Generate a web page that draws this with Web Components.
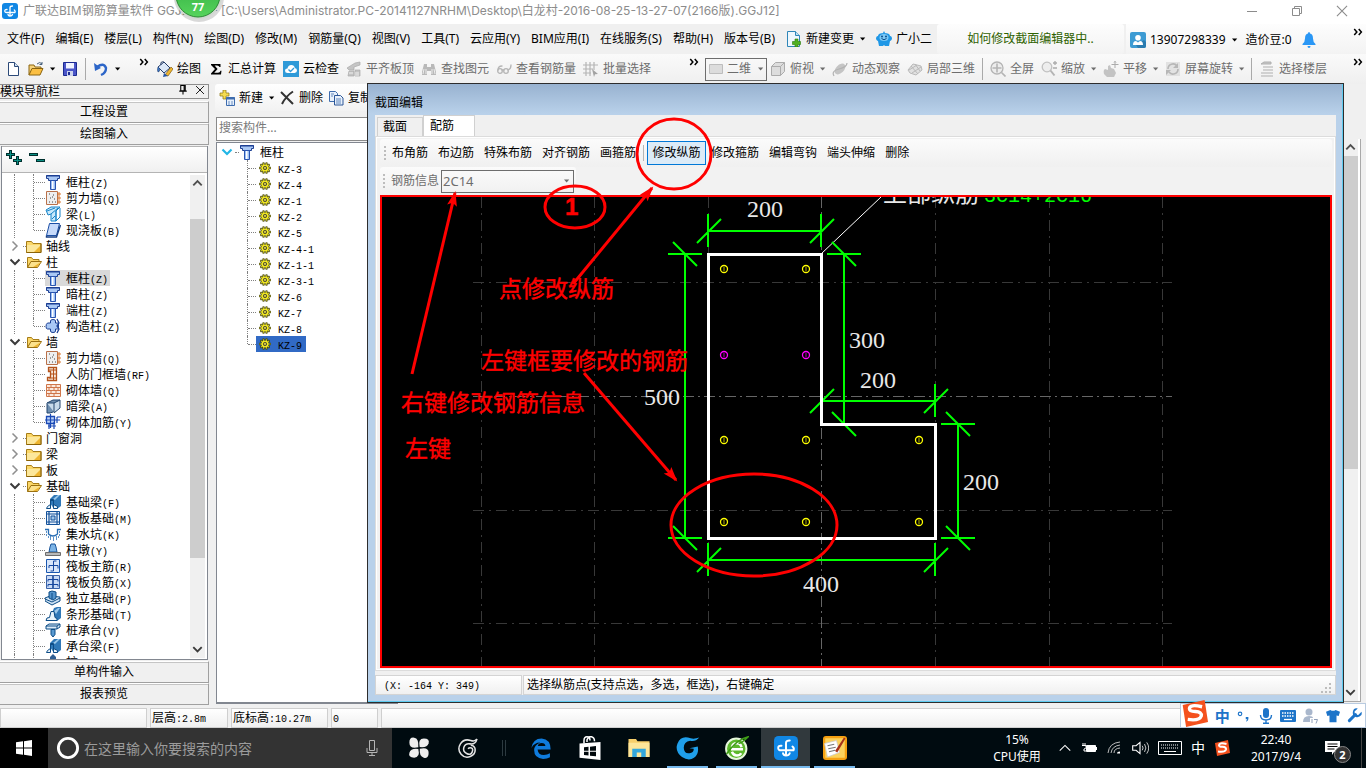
<!DOCTYPE html>
<html lang="zh-CN">
<head>
<meta charset="utf-8">
<title>广联达BIM钢筋算量软件 GGJ2013</title>
<style>
  html, body { margin: 0; height: 100%; overflow: hidden; background: #f0f0f0; }
  body { font: 12px/16px "Noto Sans", "Noto Sans CJK SC", sans-serif; color: #000; }
</style>
</head>
<body>
<app-shell></app-shell>
<script>
const RESET = `
  *, *::before, *::after { box-sizing: border-box; }
  button, input, select { font: inherit; color: inherit; margin: 0; padding: 0; border: 0; background: none; border-radius: 0; outline: 0; }
  button { white-space: nowrap; }
  svg { display: block; }
  .grow { flex: 1; min-width: 0; }
`;
function define(tag, css, render) {
  customElements.define(tag, class extends HTMLElement {
    connectedCallback() {
      if (this.shadowRoot) return;
      const t = document.createElement('template');
      t.innerHTML = `<style>${RESET}${css}</style>${render(this)}`;
      this.attachShadow({ mode: 'open' }).append(t.content.cloneNode(true));
    }
  });
}

/* ---------- icons, drawn on a 16-unit grid unless a view box is given ---------- */
const column = `<path d="M1.5 1.5h13v3h-2v2h-9v-2h-2z" fill="#a9c8f5" stroke="#1d3f93"/><path d="M5.500 6.500h5v9h-5z" fill="#9cc0f5" stroke="#2a55b0"/><path d="M7 7h1.500v8H7z" fill="#fff"/><path d="M1 2h14" stroke="#1d3f93"/>`;
const beamEnd = `<path d="M5 9V5l4-4h7v11l-4 3H9z" fill="#2f78b8"/><path d="M8 5l5-4h2l-5 5z" fill="#9cc8ea"/><path d="M1.500 14.500h4v-8h3v8h4v-2l-4-2V5.500h-3v5l-3 2z" fill="#e8f3fb" stroke="#0d4c86"/>`;
const S = 'fill="none" stroke-linecap="round" stroke-linejoin="round"';
const gearMark = `<path d="M5 1h2v2h2V1h2v3h1V3h2v2h-1v2h3v2h-3v2h1v2h-2v-1h-1v3H9v-2H7v2H5v-3H4v1H2v-2h1V9H0V7h3V5H2V3h2v1h1z" fill="#f7ee22" stroke="#2b2a00" stroke-width=".9"/><circle cx="8" cy="8" r="2.300" fill="#fff45a" stroke="#222"/><circle cx="8" cy="8" r=".8"/>`;
const ICONS = {
  app: `<rect width="16" height="16" rx="3" fill="#1187e4"/><g ${S} stroke="#fff" stroke-width="1.300"><path d="M8 12.500V4.500q0-1.500 2.500-1.500M5 6.500Q2.800 6.300 2.800 8T5 9.500h8q.7-1.500-.7-2.500"/><path d="M6 11.500q.3 1.500 2 1.500 2 0 2.500-1.500"/></g>`,
  file: `<path d="M3.500 1.500h6l4 4v9h-10z" fill="#fff" stroke="#2c4a78"/><path d="M9.500 1.500v4h4" fill="#cfdff2" stroke="#2c4a78"/>`,
  open: `<path d="M1 14V4h5l1 2h6v2" fill="#f6d27a" stroke="#8a6410"/><path d="M1 14l3-6.500h11L12 14z" fill="#fbbf42" stroke="#8a6410"/><path d="M9 3q3-3 5 0M14 1v2.500h-2.500" fill="none" stroke="#46607c"/>`,
  save: `<path d="M1.500 1.500h13v13h-13z" fill="#4a55c8" stroke="#1b2a90"/><path d="M4 2h8v5.500H4z" fill="#f1f4ff"/><path d="M5 10h6v5H5z" fill="#cbd3ec"/><path d="M6 11h2v3H6z" fill="#1b2a90"/>`,
  undo: `<path d="M4 6q7-5 9 1 0 5-5 7" fill="none" stroke="#2d66c8" stroke-width="2.400"/><path d="M1 2l1 8 6-3z" fill="#2d66c8"/>`,
  paint: `<path d="M1 6l6-5 6 6-6 5z" fill="#dce8f8" stroke="#223a66"/><path d="M1 6q-1 3 0 5 2 0 1.500-3.500" fill="#3d7bd0" stroke="#223a66" stroke-width=".6"/><path d="M4 4Q3 0 7 1" fill="none" stroke="#223a66"/><path d="M8 14l6-8 2 2-5 7z" fill="#f2b730" stroke="#6d4a00" stroke-width=".6"/><path d="M7 12l4 3-5 1z" fill="#2958a6"/>`,
  sigma: `<path d="M3 3h9.500v3h-1q-.5-1.600-2.500-1.600H6.600L9.600 8l-3.400 3.800H10q2 0 2.500-2h1L13 13.500H3v-1L7 8 3 4z" fill="#000"/>`,
  cloud: `<rect width="16" height="16" fill="#2f9ad8"/><path d="M4.500 12q-2.500 0-2.500-2.300T4.500 7.500Q5 4 8.300 4q3 0 3.500 3 2.200.3 2.200 2.500T11.500 12z" fill="#fff"/><path d="M5.500 8.500l2 2 3.500-3.500" fill="none" stroke="#2f9ad8" stroke-width="1.300"/>`,
  slabtop: `<path d="M1 7l8-5 5-1v3L8 6v3H3zM3 10h5v5H2zM9 9h5v6H9z" fill="#b9b9b9" stroke="#989898" stroke-width=".7"/><path d="M3 12h4M10 11v4M12 11v4" stroke="#eee"/>`,
  find: `<path d="M3 3h3v3h4V3h3l2 8v3h-5v-4H6v4H1v-3z" fill="#ababab"/><path d="M3 8l-1 5M5 8v5M11 8v5M13 8l1 5" stroke="#ececec"/>`,
  glasses: `<g ${S} stroke="#a6a6a6" stroke-width="1.300"><circle cx="4" cy="10" r="2.300"/><circle cx="10" cy="10" r="2.300"/><path d="M6 9h2M2 9q0-4 4-4M12 9q3-1 3-5"/></g>`,
  batch: `<path d="M3 1v14M7 1v14M11 1v8M0 4h15M0 8h10M0 12h8" stroke="#a6a6a6" stroke-width="1.200"/><path d="M9 8l6 5-3 .3L11 16z" fill="#8f8f8f"/>`,
  plane2d: `<path d="M1.500 3.500h13v9h-13z" fill="#dcdcdc" stroke="#bdbdbd"/>`,
  cube: `<path d="M1.500 5.500l4-4h9v9l-4 4h-9z" fill="#d8d8d8" stroke="#9a9a9a"/><path d="M1.500 5.500h9v9M10.500 5.500l4-4" fill="none" stroke="#9a9a9a"/>`,
  orbit: `<ellipse cx="8" cy="8" rx="6.500" ry="4" transform="rotate(-45 8 8)" fill="#b9b9b9"/><path d="M2 15Q-1 10 7 8t8-6" fill="none" stroke="#a2a2a2" stroke-width="1.200"/>`,
  part3d: `<path d="M1 9l5-6 8 2 1 4-6 5-6-2z" fill="#dcdcdc" stroke="#ababab"/><path d="M4 5l7 8M8 3l5 7M2 9l8-5M5 12l9-6" stroke="#ababab"/>`,
  full: `<circle cx="7" cy="7" r="6" fill="#ececec" stroke="#a5a5a5" stroke-width="1.300"/><path d="M7 2.500v9M2.500 7h9M11.500 11.500l4 4" stroke="#a5a5a5" stroke-width="1.600"/>`,
  zoom: `<circle cx="6" cy="6" r="4.800" fill="#ececec" stroke="#b5b5b5" stroke-width="1.300"/><path d="M9.500 9.500l4 5" stroke="#a5a5a5" stroke-width="2"/><path d="M12 2h4M14 0v4M12 7h4" stroke="#999" stroke-width="1.300"/>`,
  pan: `<path d="M1 13q-1-4 1-5l3 1V5l2-1 1 3 3 1 2 4-2 4H4z" fill="#b8b8b8"/><path d="M12 0v7M8.500 3.500h7M11 1.500l1-1 1 1" stroke="#999" fill="none"/>`,
  rotate: `<path d="M1 1h14v14H1z" fill="#dedede"/><path d="M3 8a5 5 0 0 1 9-3M13 8a5 5 0 0 1-9 3" fill="none" stroke="#a8a8a8" stroke-width="1.600"/><path d="M13 2v5H8zM1 14v-5h5z" fill="#a8a8a8"/>`,
  floors: `<path d="M2 3l3-2h7v2zM4 6h10M4 9h10M2 12h12M2 15h12" fill="#bbb" stroke="#9f9f9f"/>`,
  change: `<path d="M1.500.5h8l4 4v11h-12z" fill="#eef7fd" stroke="#2f86b8"/><path d="M9.500.5v4h4" fill="#bfe0f2" stroke="#2f86b8"/><path d="M9 8h3v2.500h2.500v3H12V16H9v-2.500H6.500v-3H9z" fill="#4fb022" stroke="#2a7a0c" stroke-width=".6"/>`,
  robot: `<path d="M8 0l1 2h-2zM2 5q0-3 6-3t6 3q2 0 2 3-1 2-2 2l-1 5H9l-1-1-1 1H3l-1-5q-1 0-2-2 0-3 2-3z" fill="#1f97e6"/><ellipse cx="8" cy="6.500" rx="4.500" ry="3.500" fill="#7cc8f5"/><path d="M5.500 7.500q2.500 2.500 5 0" fill="none" stroke="#0b4f8c"/><circle cx="6" cy="5.500" r="1" fill="#0b4f8c"/><circle cx="10" cy="5.500" r="1" fill="#0b4f8c"/>`,
  user: `<rect width="16" height="16" rx="2" fill="#3d9bd3"/><path d="M6 13l8-5 2 2v4q0 2-2 2H8z" fill="#2b7cb0"/><circle cx="8" cy="5.800" r="2.800" fill="#fff"/><path d="M3 13q0-4 3-4l2 1.500L10 9q3 0 3 4z" fill="#fff"/>`,
  bell: `<path d="M8 0q1 0 1 1.500 3 .5 3 5 0 3.500 2.500 5.500v1h-13v-1Q4 10 4 6.500q0-4.500 3-5Q7 0 8 0zM6.500 14h3q0 2-1.500 2t-1.500-2z" fill="#2a97f5"/>`,
  column,
  wall: `<path d="M1.500 1.500h11v13h-11z" fill="#efefef" stroke="#b9714a"/><path d="M14 2v12M12 4h4M12 8h4M12 12h4" stroke="#d9772e"/><path d="M4 4h1M8 5h1M5 8h1M9 9h1M4 12h1M7 12h1M10 12h1M7 7h1" stroke="#444"/>`,
  beam: `<path d="M1 4l5-3h9l-4 4v10H6V8L3 9z" fill="#c9e9fb" stroke="#1683c8"/><path d="M2 5l8-3M6 8l7-6M7 13l3-3M11 5v10l4-4V2" stroke="#1683c8" fill="none"/>`,
  slab: `<path d="M4.500 1.500h10l-3 12h-10z" fill="#c7dafa" stroke="#1c4fa5"/><path d="M1.500 13.500v1.500h10l4-12" fill="none" stroke="#173f85" stroke-width="1.400"/>`,
  folder: `<path d="M.5 3.500h5l1.500 2h8v9H.5z" fill="#fbd768" stroke="#a67c17"/><path d="M1 7h13v7H1z" fill="#fce79b"/><path d="M8 14l6-6v6z" fill="#eeb530"/><path d="M.5 14.500h14.500v-9" fill="none" stroke="#8a6208"/>`,
  folderopen: `<path d="M1.500 13.500v-10h4l1.500 2h6v3" fill="#fbd768" stroke="#a67c17"/><path d="M1.500 13.500l3.500-6h10.500l-4 6z" fill="#fce28c" stroke="#9a7010"/><path d="M7 13l8-5-4 5z" fill="#eeb530"/>`,
  cross: `<path d="M5.500 3q0-1.500 2.500-1.500T10.500 3v2h3v6h-3v2q0 1.500-2.500 1.500T5.500 13v-2h-3q-1.500 0-1.500-2.500T2.500 5h3z" fill="#a9c8f5" stroke="#1b3f93"/><path d="M12 1l2 4-2 3 2 3-2 4" stroke="#1b3f93" stroke-width="1.300" fill="none"/>`,
  door: `<path d="M3.500 1.500h8v13h-9v-3h3v-6h-2z" fill="#f7e7da" stroke="#b5531b" stroke-width="1.300"/><path d="M8.500 1v14M4 4h7M6 8h5M4 12h7" stroke="#b5531b"/>`,
  brick: `<path d="M1.500 2.500h14v12h-14z" fill="#fbe9dd" stroke="#d0764a"/><path d="M1 5.500h14M1 8.500h14M1 11.500h14M6 3v3M11 3v3M4 6v3M9 6v3M13 6v3M6 9v3M11 9v3M4 12v3M9 12v3" stroke="#d0764a"/>`,
  hidden: `<path d="M2 5l6-3h7l-4 4v7l-6 2H2z" fill="#6f8fb0" stroke="#24466e"/><path d="M2 5h7v9M9 5l6-3v8l-6 5" fill="#c8daea" stroke="#24466e"/>`,
  mesh: `<path d="M1.500 2.500h8v7h-8z" fill="#b9d0f7" stroke="#1a49b5" stroke-width="1.300"/><path d="M0 6h15M12 3h4M12 3v6M5.500 0v14M4 10v5M9 8v7M3 12h8" stroke="#1a49b5" stroke-width="1.200" fill="none"/>`,
  beamEnd,
  raft: `<path d="M1.500 1.500h13v13h-13z" fill="#e5effb" stroke="#14529a"/><path d="M4 1v14M12 1v14M1 4h14M1 12h14" stroke="#14529a" stroke-width="1.200"/><path d="M6 6h4v4H6z" fill="#9cc3e8" stroke="#14529a"/>`,
  pit: `<path d="M0 3.500h3.500V8q4.500 4 9 0V3.500H16" fill="none" stroke="#2a6fb5" stroke-width="1.300"/><path d="M1 6h1M14 6h1M1 9h1M3 11h1M5 13h1M8 12h1M8 14h1M11 13h1M13 11h1M14 9h1M5 11h1M11 11h1" stroke="#2a6fb5" stroke-width="1.300"/>`,
  pier: `<path d="M6 2h4l1 3 1 5H4l1-5z" fill="#7db4e6" stroke="#19549a"/><path d="M.5 10.500h15v3H.5z" fill="#b9b9b9" stroke="#6d6d6d"/>`,
  rebarmain: `<path d="M1.500 1.500h13v13h-13z" fill="#d8e6fa" stroke="#1b58b0"/><path d="M8.500 3v10M4 7.500h9M8.500 3h3M13 7.500v3M4 7.500v2.500M8.500 13h-3" stroke="#1647a0" fill="none"/>`,
  rebarneg: `<path d="M1.500 1.500h13v13h-13z" fill="#c9daf5" stroke="#3a62a8"/><path d="M8 2v12" stroke="#3a62a8" stroke-width="2"/><path d="M3 5.500h10v2M3 5.500v2M3 10.500h10v2M3 10.500v2" stroke="#1647a0" fill="none"/>`,
  isolated: `<path d="M0 8l5-2 10 1v4l-8 4-7-4z" fill="#cfe3f4" stroke="#0d4c86"/><path d="M4 2l3-1 4 1v6l-3 2-4-2z" fill="#5494cc" stroke="#0d4c86"/><path d="M7 3v6M0 9l7 3 8-4" stroke="#0d4c86" fill="none"/>`,
  strip: `<path d="M7 7l2-5 3-1h4v11l-4 3z" fill="#2f78b8"/><path d="M9 5l4-3h2l-4 6z" fill="#9cc8ea"/><path d="M1 14.500h11v-2l-2-1-1-6H6l-1.500 6L2 12z" fill="#e8f3fb" stroke="#0d4c86"/>`,
  pilecap: `<path d="M1 4l3-2h11v3l-3 2H1z" fill="#dcebf8" stroke="#0d4c86"/><path d="M1 4h11l3-2M12 4v3" fill="none" stroke="#0d4c86"/><path d="M6 7.500h4v5L8 15l-2-2.500z" fill="#5a9ad0" stroke="#0d4c86"/>`,
  pile: `<path d="M8 0l3 3v12H5V3z" fill="#2f5f94"/>`,
  gear: gearMark,
  newitem: `<path d="M4 0h3v3h3v3H7v3H4V6H1V3h3z" fill="#f5dc50" stroke="#8b7410" stroke-width=".7"/><path d="M7.500 7.500h8v8h-8z" fill="#e7f0fb" stroke="#3e6cae"/><path d="M7 8.500h9" stroke="#3e6cae" stroke-width="2"/><path d="M9 12h2M12 12h2M9 14h2M12 14h2" stroke="#6a90c4"/>`,
  del: `<path d="M2 2l12 12M14 1.500Q7 6 3 14" fill="none" stroke="#333" stroke-width="2"/>`,
  copy: `<path d="M1.500 1.500h6l2 2v8h-8z" fill="#e9f1fb" stroke="#3e6cae"/><path d="M6.500 5.500h6l2.500 2.500v7H6.500z" fill="#e9f1fb" stroke="#2c5697"/><path d="M3 4h3M3 6h2M8 9h5M8 11h5M8 13h5" stroke="#5f86be"/>`,
  expand: `<path d="M4.500 0v9M0 4.500h9M11.500 6v9M7 10.500h9" stroke="#00302e" stroke-width="3"/><path d="M4.500 1v7M1 4.500h7M11.500 7v7M8 10.500h7" stroke="#0b8f84"/>`,
  collapse: `<path d="M0 4.500h9M7 10.500h9" stroke="#00302e" stroke-width="3"/><path d="M1 4.500h7M8 10.500h7" stroke="#0b8f84"/>`,
  right: `<path d="M5.500 3.500L10 8l-4.500 4.500" fill="none" stroke="#8f8f8f" stroke-width="1.500"/>`,
  down: `<path d="M3.500 5.500L8 10l4.500-4.500" fill="none" stroke="#3b3b3b" stroke-width="2"/>`,
  up: `<path d="M3.500 10L8 5.500l4.500 4.500" fill="none" stroke="#4f4f4f" stroke-width="2"/>`,
  downcyan: `<path d="M3.500 5.500L8 10l4.500-4.500" fill="none" stroke="#22b6e6" stroke-width="2.200"/>`,
  caret: `<path d="M4 6h7l-3.500 4z" fill="currentColor"/>`,
  more: `<path d="M3 4l3.500 4L3 12M9 4l3.500 4L9 12" fill="none" stroke="#000" stroke-width="2"/>`,
  pin: `<path d="M5 2h6v7H5zM3 9.500h10M8 10v4M9.500 2v7" fill="none" stroke="#000" stroke-width="1.400"/>`,
  close: `<path d="M3.500 3.500l9 9M12.500 3.500l-9 9" stroke="currentColor" fill="none"/>`,
  min: `<path d="M3 8.500h10" stroke="currentColor"/>`,
  restore: `<path d="M3.500 5.500h7v7h-7zM5.500 5.500v-2h7v7h-2" fill="none" stroke="currentColor"/>`,
  windows: `<path d="M0 2.300l7-1v6.200H0zM8 1.200L16 0v7.500H8zM0 8.500h7v6.200l-7-1zM8 8.500h8V16l-8-1.200z" fill="#fff"/>`,
  ring: `<circle cx="8" cy="8" r="6.400" fill="none" stroke="#fff" stroke-width="1.900"/>`,
  mic: `<path d="M5.500.5h5v10h-5z" fill="none" stroke="#b5b5b5"/><path d="M3 8v4.500h10V8M8 12.500V15M5 15.500h6" fill="none" stroke="#b5b5b5"/>`,
  fan: `<g fill="#eee"><path d="M7.500 7.500Q1 9 1 4q0-4 3.500-3.500T7.500 7.500z"/><path d="M8.500 7.300Q7 1 11.500 1q4.500 0 3.500 3.500t-6.500 2.800z"/><path d="M8.600 8.500Q15 7 15 11.500q0 4.500-3.500 3.500T8.600 8.500z"/><path d="M7.500 8.700Q9 15 4.500 15q-4.500 0-3.500-3.500t6.500-2.800z"/></g>`,
  swirl: `<g fill="none" stroke="#e4e4e4" stroke-width="1.100"><path d="M14.500 1.500Q13 3.500 10 2.500 5 1 2.500 5T3 12.500t7 1.500 3-6q-1-2-3-2"/><path d="M14.500 1.500q-1 4-5 3.500Q6 4.500 5 7.500t2 4.500 4-1-.5-3-2.500.5"/></g>`,
  edge: `<path d="M1 8Q2 1 8.500 1 15 1.500 15 9H5.500q.5 4 4.500 4 2.500 0 4.500-1.200v3Q12.500 16 9.500 16 3 15.500 3 9.500 3 6 7.500 4 3 4 1 8zM5.700 6.500h5.500Q11 4.300 8.500 4.300 6 4.400 5.700 6.500z" fill="#0f7bdc"/>`,
  store: `<path d="M1 5l14-1v12L1 14.500z" fill="#fff"/><path d="M4 5V3q0-2.500 2-2.500T8 3M6 4V2.500Q7 0 9 .5t2 3" fill="none" stroke="#fff"/><path d="M4 7.500l3-.3v2.600H4zM8 7.100l4-.4v3.100H8zM4 10.500h3V13l-3-.3zM8 10.500h4v3L8 13.100z" fill="#00080c"/>`,
  explorer: `<path d="M1 2h5l1 1.500h8V14H1z" fill="#f7cf6b"/><path d="M1 4.500h14V14H1z" fill="#fde69a"/><path d="M3.500 14v-5.500h9V14h-3v-3h-3v3z" fill="#33a7dc"/>`,
  gball: `<path d="M15.500 1Q13 4 9.500 3.200 5 4 5.200 8T9 11.500q3-.5 2.800-3L9 8.200 14.500 7q1 5-2.500 7.500T4 14Q-1 10 1 5t7-4q3.500 1.500 7.500 0z" fill="#1f9fea"/>`,
  green: `<circle cx="7.500" cy="8.500" r="6.800" fill="#5cb82c" stroke="#e6f7db" stroke-width="1.300"/><path d="M4 8.800h8M4.600 7.500q.5-2.700 3.200-2.700T11 7.500M4.600 10.500q1 2.500 3.200 2.500t3-1.500" fill="none" stroke="#fff" stroke-width="1.600"/><path d="M1 12Q8 2 15.500.5 11 5 9 5" fill="none" stroke="#3e9c17"/>`,
  note: `<rect width="16" height="16" rx="2" fill="#f5a011"/><rect x="1.500" y="1.500" width="13" height="13" fill="#fbd25d"/><path d="M1 5l8-2 2 8-8 3z" fill="#fff" stroke="#c9c9c9" stroke-width=".5"/><path d="M3 6.500l4.500-1M3.500 8.500l5-1M4 10.500l4-1" stroke="#777" stroke-width=".7"/><path d="M8 10l6-9 1 .7L9.500 11z" fill="#a8321a"/>`,
  chevup: `<path d="M2 11l6-6 6 6" fill="none" stroke="#fff" stroke-width="1.200"/>`,
  battery: `<path d="M5.500 5.500h9v6h-9z" fill="#fff" stroke="#fff"/><path d="M2 3v2M4 3v2M1 5.500h4v2q0 1-2 1.500v2h2" fill="none" stroke="#fff"/><path d="M15.500 7v3" stroke="#fff"/>`,
  wifi: `<path d="M2 13Q3 3 14 2M5 13q1-7 9-8M8 13q0-4.500 6-5" fill="none" stroke="#bdbdbd"/><path d="M11 13.500q0-2 3-2v2z" fill="#fff"/>`,
  speaker: `<path d="M1.500 6h3L8 3v10L4.500 10h-3z" fill="none" stroke="#fff"/><path d="M10 6q1.500 2 0 4M12 4.500q2.500 3.500 0 7M14 3q3.500 5 0 10" fill="none" stroke="#ddd" stroke-width=".8"/>`,
  sogou: `<path d="M1 3L14 0l2 13-13 3z" fill="#f4511e"/><path d="M12.500 4Q5 2.300 5 5.200q0 1.500 3.500 1.600 4 .3 3.500 2.700-1 3-8 2" fill="none" stroke="#fff" stroke-width="2"/>`,
  comma: `<circle cx="3.500" cy="5.500" r="2" fill="none" stroke="#1d74c9" stroke-width="1.300"/><path d="M10 9h3v2.500q0 2-2.500 3v-1.200q1.200-.5 1.200-1.500H10z" fill="#1d74c9"/>`,
  micblue: `<rect x="5" y="0" width="6" height="10" rx="3" fill="#1d74c9"/><path d="M2.500 7q0 5 5.500 5t5.500-5M8 12v3M5 15.300h6" fill="none" stroke="#1d74c9" stroke-width="1.400"/>`,
  keyblue: `<rect x="0" y="2" width="16" height="12" rx="1" fill="#1d74c9"/><path d="M2 5h12M2 8h12" stroke="#fff" stroke-width="1.500" stroke-dasharray="1.500 1"/><path d="M4 11.500h8" stroke="#fff" stroke-width="1.300"/>`,
  person: `<circle cx="6" cy="4" r="3.500" fill="#a9b7cc"/><path d="M0 14q0-6 6-6 4 0 4 2H7v4z" fill="#a9b7cc"/><path d="M9 11v4M11 11.500h3.500L13 15.500" fill="none" stroke="#8e9fb9"/>`,
  shirt: `<path d="M5 1q3 2 6 0l5 2-1.500 5L12 7.500V15H4V7.500L1.500 8 0 3z" fill="#1d74c9"/>`,
  wrench: `<path d="M2.500 13.500L9 7" stroke="#1d74c9" stroke-width="3.200" stroke-linecap="round"/><path d="M15.500 4L12 7.500 8.500 7 8 3.800 11.500.5Q7-.5 6.300 4t3 5.500 6-2q.7-1.500.2-3.500z" fill="#1d74c9"/>`,
  notify: `<path d="M0 1h15v11h-6l-2 3v-3H0z" fill="#fff"/><path d="M2.500 4h10M2.500 6.500h10M2.500 9h7" stroke="#000"/>`
};
define('ui-icon', `
  :host { display: inline-block; flex: none; width: var(--size, 16px); height: var(--size, 16px); }
  svg { width: 100%; height: 100%; }`,
  el => `<svg viewBox="0 0 16 16" aria-hidden="true">${ICONS[el.getAttribute('name')] || ''}</svg>`);

const icon = (name, size) => `<ui-icon name="${name}"${size ? ` style="--size:${size}px"` : ''}></ui-icon>`;

/* ---------- toolbar button ---------- */
define('tool-button', `
  :host { display: flex; flex: none; }
  button { display: flex; align-items: center; gap: 4px; height: 22px; }
  :host([off]) button { color: #6d6d6d; }
  :host([off]) .i { opacity: .8; }
  ui-icon.c { --size: 12px; margin: 0 -4px 0 -1px; }`,
  el => `<button type="button">${el.hasAttribute('icon') ? `<ui-icon class="i" name="${el.getAttribute('icon')}"></ui-icon>` : ''}<slot></slot>${el.hasAttribute('menu') ? '<ui-icon class="c" name="caret"></ui-icon>' : ''}</button>`);

/* ---------- title bar ---------- */
define('title-bar', `
  :host { display: flex; align-items: center; height: 24px; background: #fff; color: #8c8c8c; padding: 0 16px 2px 2px; font-size: 12px; }
  h1 { margin: 0 0 0 5px; font: inherit; white-space: nowrap; flex: 1; }
  h1 span { font-family: Inter, "Noto Sans CJK SC", sans-serif; }
  button { width: 45px; height: 20px; display: flex; align-items: center; justify-content: center; }
  .ball { position: absolute; left: 172px; top: 0; z-index: 3; }
  nav { display: flex; margin-right: -14px; }`,
  () => `${icon('app')}<h1>广联达BIM钢筋算量软件 <span>GGJ2013 - [C:\\Users\\Administrator.PC-20141127NRHM\\Desktop\\白龙村-2016-08-25-13-27-07(2166版).GGJ12]</span></h1>
  <nav><button type="button" aria-label="最小化">${icon('min')}</button><button type="button" aria-label="还原">${icon('restore')}</button><button type="button" aria-label="关闭">${icon('close', 18)}</button></nav>
  <svg class="ball" width="54" height="28"><defs><linearGradient id="g" x2="0" y2="1"><stop offset="0" stop-color="#2ba53c"/><stop offset="1" stop-color="#56d45c"/></linearGradient></defs>
  <circle cx="27" cy="-3" r="25" fill="#000" opacity=".15"/><circle cx="26" cy="-5" r="24" fill="#cfd8cf"/><circle cx="26" cy="-5" r="22" fill="url(#g)" stroke="#2b8b34"/>
  <text x="26" y="11" text-anchor="middle" font-size="11" font-weight="700" fill="#fff">77</text></svg>`);

/* ---------- menu ---------- */
define('menu-bar', `
  :host { display: flex; align-items: stretch; height: 30px; background: #f0f0f0; }
  .menus { display: flex; align-items: center; gap: 11px; padding: 0 7px; width: 937px; flex: none; overflow: hidden; }
  .tip { width: 187px; flex: none; background: linear-gradient(#fdfdfd, #f3f3f3); border-radius: 3px; display: flex; align-items: center; justify-content: center; }
  .tip a { color: #2f6200; text-decoration: none; }
  .user { flex: 1; margin-left: 2px; padding: 2px 2px 0 4px; background: linear-gradient(#fdfdfd, #f3f3f3); display: flex; align-items: center; gap: 9px; }
  .user ui-icon:last-child { align-self: flex-start; }`,
  () => `<div class="menus">${['文件(F)','编辑(E)','楼层(L)','构件(N)','绘图(D)','修改(M)','钢筋量(Q)','视图(V)','工具(T)','云应用(Y)','BIM应用(I)','在线服务(S)','帮助(H)','版本号(B)'].map(t => `<button type="button">${t}</button>`).join('')}
    <tool-button icon="change" menu>新建变更</tool-button><tool-button icon="robot">广小二</tool-button></div>
  <div class="tip"><a href="#">如何修改截面编辑器中..</a></div>
  <div class="user"><tool-button icon="user" menu>13907298339</tool-button><button type="button">造价豆:0</button>${icon('bell')}<span class="grow"></span>${icon('more', 12)}</div>`);

/* ---------- main tool strips ---------- */
define('tool-strips', `
  :host { display: flex; height: 30px; background: linear-gradient(#fafafa, #efefef); }
  .g { display: flex; align-items: center; gap: 7px; flex: none; padding: 0 5px; border-radius: 3px; }
  .a { width: 153px; padding-right: 3px; } .b { width: 550px; padding-left: 4px; padding-right: 3px; } .c { flex: 1; padding-right: 2px; padding-left: 2px; }
  .sep { width: 1px; height: 22px; background: #a9a9a9; flex: none; }
  .m { align-self: flex-start; margin-top: 2px; --size: 12px; }
  .combo { display: flex; align-items: center; width: 62px; height: 23px; border: 1px solid #6d6d6d; padding-left: 2px; gap: 3px; margin-right: -4px; color: #6d6d6d; }
  select { appearance: none; width: 26px; height: 16px; }`,
  () => `<div class="g a">${['file','open','save'].map((n, i) => `<tool-button icon="${n}" ${i == 1 ? 'menu' : ''}></tool-button>`).join('')}<span class="sep"></span><tool-button icon="undo" menu></tool-button><span class="grow"></span><ui-icon class="m" name="more"></ui-icon></div>
  <div class="g b"><tool-button icon="paint">绘图</tool-button><tool-button icon="sigma">汇总计算</tool-button><tool-button icon="cloud">云检查</tool-button><tool-button off icon="slabtop">平齐板顶</tool-button><tool-button off icon="find">查找图元</tool-button><tool-button off icon="glasses">查看钢筋量</tool-button><tool-button off icon="batch">批量选择</tool-button><span class="grow"></span><ui-icon class="m" name="more"></ui-icon></div>
  <div class="g c"><label class="combo">${icon('plane2d')}<select aria-label="视图模式"><option>二维</option><option>三维</option></select>${icon('caret', 12)}</label>
  <tool-button off icon="cube" menu>俯视</tool-button><tool-button off icon="orbit">动态观察</tool-button><tool-button off icon="part3d">局部三维</tool-button><span class="sep"></span><tool-button off icon="full">全屏</tool-button><tool-button off icon="zoom" menu>缩放</tool-button><tool-button off icon="pan" menu>平移</tool-button><tool-button off icon="rotate" menu>屏幕旋转</tool-button><span class="sep"></span><tool-button off icon="floors">选择楼层</tool-button><span class="grow"></span><ui-icon class="m" name="more"></ui-icon></div>`);

/* ---------- scroll bar ---------- */
define('scroll-rail', `
  :host { display: flex; flex-direction: column; width: 15px; background: #f0f0f0; flex: none; }
  ui-icon { --size: 15px; margin: 1px 0; }
  .t { flex: var(--before, 0) 0 0; } .h { flex: var(--thumb, 1) 0 0; background: #cdcdcd; } .e { flex: var(--after, 1) 0 0; }`,
  () => `${icon('up')}<span class="t"></span><span class="h"></span><span class="e"></span>${icon('down')}`);

/* ---------- tree rows ---------- */
define('tree-row', `
  :host { display: flex; height: 16px; align-items: center; white-space: nowrap; }
  .v { width: 1px; height: 16px; border-left: 1px dotted #808080; flex: none; }
  .v.half { height: 8px; align-self: flex-start; }
  .h { height: 1px; border-top: 1px dotted #808080; flex: none; }
  .l { margin-left: 5px; padding-top: 1px; height: 16px; line-height: 15px; } small { font: 10px/15px "Liberation Mono", monospace; }
  .pick { display: flex; align-items: center; }
  :host([kind=group]) .l { margin-left: 4px; }
  :host([selected]) .pick { background: #d9d9d9; padding-right: 2px; }
  :host([kind=member]) .l { margin-left: 7px; }
  :host([kind=member][selected]) .pick { background: #316ac5; padding-right: 4px; }`,
  el => {
    const kind = el.getAttribute('kind'), name = el.textContent, key = el.getAttribute('key') || '';
    const half = el.hasAttribute('last') ? ' half' : '';
    const label = `<span class="l">${name}${key && `<small>${key}</small>`}</span>`;
    if (kind === 'group') return `<span style="width:5px"></span>${icon(el.hasAttribute('open') ? 'down' : 'right')}<span class="h" style="width:3px"></span>${icon(el.hasAttribute('open') ? 'folderopen' : 'folder')}${label}`;
    if (kind === 'root') return `<span style="width:2px"></span>${icon('downcyan')}<span class="h" style="width:4px"></span>${icon('column')}${label}`;
    if (kind === 'member') return `<span class="v${half}" style="margin-left:30px"></span><span class="h" style="width:8px"></span><span class="pick"><span style="width:3px"></span>${icon('gear', 12)}<span class="l"><small>${name}</small></span></span>`;
    return `<span class="v" style="margin-left:12px"></span><span class="v${half}" style="margin-left:18px"></span><span class="h" style="width:11px"></span><span class="pick">${icon(el.getAttribute('icon'))}${label}</span>`;
  });

/* ---------- navigation panel ---------- */
const NAV = [
  ['column','框柱','(Z)'],['wall','剪力墙','(Q)'],['beam','梁','(L)'],['slab','现浇板','(B)',1],
  ['-','轴线'],['+','柱'],['column','框柱','(Z)',0,1],['column','暗柱','(Z)'],['column','端柱','(Z)'],['cross','构造柱','(Z)',1],
  ['+','墙'],['wall','剪力墙','(Q)'],['door','人防门框墙','(RF)'],['brick','砌体墙','(Q)'],['hidden','暗梁','(A)'],['mesh','砌体加筋','(Y)',1],
  ['-','门窗洞'],['-','梁'],['-','板'],['+','基础'],['beamEnd','基础梁','(F)'],['raft','筏板基础','(M)'],['pit','集水坑','(K)'],['pier','柱墩','(Y)'],
  ['rebarmain','筏板主筋','(R)'],['rebarneg','筏板负筋','(X)'],['isolated','独立基础','(P)'],['strip','条形基础','(T)'],['pilecap','桩承台','(V)'],['beamEnd','承台梁','(F)'],['pile','桩','(U)']];
define('nav-panel', `
  :host { display: flex; flex-direction: column; width: 210px; flex: none; padding: 0 1px 3px 0; background: #f0f0f0; }
  header { display: flex; align-items: center; height: 15px; border: 1px solid #8e8e8e; border-left: 0; gap: 2px; margin: 0 0 2px; padding-right: 1px; }
  header span { flex: 1; } header button + button { margin-left: 2px; } header ui-icon { --size: 14px; }
  .tab { height: 22px; background: #f0f0f0; border: 1px solid #a0a0a0; border-top-color: #fff; border-width: 1px 1px 1px 0; box-shadow: inset 0 1px #c5c5c5; width: 100%; flex: none; }
  .body { flex: 1; min-height: 0; display: flex; flex-direction: column; border: 1px solid #828790; border-top: 0; margin: 1px; background: #fff; }
  .tools { height: 27px; display: flex; align-items: center; gap: 7px; padding-left: 4px; background: linear-gradient(#fff, #f0f0f0); border: 1px solid #b4b4b4; border-width: 1px 0; }
  .view { flex: 1; min-height: 0; display: flex; padding-right: 2px; }
  .tree { flex: 1; overflow: hidden; padding-top: 1px; }
  scroll-rail { --before: 26; --thumb: 328; --after: 80; margin: 2px 0 1px; }`,
  () => `<header><span>模块导航栏</span><button type="button" aria-label="固定">${icon('pin', 12)}</button><button type="button" aria-label="关闭">${icon('close')}</button></header>
  <button class="tab" type="button">工程设置</button><button class="tab" type="button">绘图输入</button>
  <div class="body"><div class="tools"><button type="button" aria-label="全部展开">${icon('expand')}</button><button type="button" aria-label="全部折叠">${icon('collapse')}</button></div>
  <div class="view"><div class="tree">${NAV.map(([i, n, k, last, sel]) => i === '+' || i === '-' ? `<tree-row kind="group" ${i === '+' ? 'open' : ''}>${n}</tree-row>` : `<tree-row kind="leaf" icon="${i}" key="${k}" ${last ? 'last' : ''} ${sel ? 'selected' : ''}>${n}</tree-row>`).join('')}</div><scroll-rail></scroll-rail></div></div>
  <button class="tab" type="button">单构件输入</button><button class="tab" type="button">报表预览</button>`);

/* ---------- member list ---------- */
define('member-panel', `
  :host { display: flex; flex-direction: column; width: 183px; flex: none; margin: 0 0 4px 5px; overflow: hidden; }
  .tools { display: flex; align-items: center; gap: 5px; height: 27px; padding-left: 4px; background: linear-gradient(#fff, #f2f2f2); border-radius: 3px; flex: none; }
  input { height: 24px; margin: 6px 0 0 1px; border: 1px solid #8a8a8a; background: #fff; padding: 0 2px 4px; flex: none; }
  input::placeholder { color: #7a7a7a; opacity: 1; }
  .tree { flex: 1; border: 1px solid #828790; border-bottom-width: 2px; margin: 1px 0 0 1px; background: #fff; padding-top: 1px; }`,
  () => `<div class="tools"><tool-button icon="newitem" menu>新建</tool-button><tool-button icon="del">删除</tool-button><tool-button icon="copy">复制</tool-button></div>
  <input type="search" placeholder="搜索构件..." aria-label="搜索构件">
  <div class="tree"><tree-row kind="root">框柱</tree-row>${['KZ-3','KZ-4','KZ-1','KZ-2','KZ-5','KZ-4-1','KZ-1-1','KZ-3-1','KZ-6','KZ-7','KZ-8','KZ-9'].map((n, i) => `<tree-row kind="member" ${i === 11 ? 'last selected' : ''}>${n}</tree-row>`).join('')}</div>`);

/* ---------- main drawing area behind the dialog ---------- */
define('drawing-area', `
  :host { display: flex; flex: 1; min-width: 0; justify-content: flex-end; margin: 55px 5px 6px 4px; border: 1px solid #a9a9a9; border-top: 0; background: #fff; padding-right: 2px; }
  scroll-rail { --before: 0; --thumb: 308; --after: 212; }`,
  () => `<scroll-rail></scroll-rail>`);

/* ---------- column section drawing ---------- */
const dimH = (x1, x2, y) => `M${x1} ${y}H${x2}` + [x1, x2].map(x => `M${x} ${y - 17}v33M${x - 11} ${y + 12}l24-24`).join('');
const dimV = (x, y1, y2) => `M${x} ${y1}V${y2}` + [y1, y2].map(y => `M${x - 17} ${y}h34M${x - 12} ${y - 12}l24 24`).join('');
define('section-canvas', `
  :host { display: block; flex: 1; min-height: 0; background: #000; border: 2px solid #f00; overflow: hidden; }
  svg { width: 100%; height: 100%; }
  text { font: 24px "Liberation Serif", "Noto Sans CJK SC", serif; fill: #e8e8e8; }
  text.bars { font: 20px "Liberation Mono", monospace; fill: #0f0; }
  .grid { stroke: #383838; stroke-dasharray: 11 5 2 5; } .axis { stroke: #666; stroke-dasharray: 11 4 2 4; }
  .dim { stroke: #0f0; stroke-width: 2; fill: none; }`,
  () => `<svg role="img" aria-label="柱截面配筋图"><g transform="translate(-382 -197)">
    <path class="grid" d="${[481, 594, 708, 935, 1049, 1162].map(x => `M${x}.5 197V800`).join('')}${[282, 510, 623].map(y => `M473 ${y}.5H1172`).join('')}"/>
    <path class="axis" d="M821.5 197V800M473 396.500H1172"/>
    <path d="M821 254L881 197" stroke="#fff"/>
    <path class="dim" d="${dimH(708, 821, 231)}${dimH(821, 935, 401)}${dimH(708, 935, 560)}${dimV(685, 254, 538)}${dimV(844, 254, 424)}${dimV(958, 424, 538)}"/>
    <path d="M708.500 254.500h113v170h114v114h-227z" fill="none" stroke="#fff" stroke-width="3"/>
    <g fill="none" stroke="#ff0" stroke-width="1.300">${[[724, 269], [806, 269], [724, 440], [806, 440], [919, 440], [724, 522], [806, 522], [919, 522]].map(([x, y]) => `<circle cx="${x}" cy="${y}" r="3.500"/><path d="M${x} ${y - 2}v4" stroke="#8a8a00"/>`).join('')}</g>
    <g fill="none" stroke="#f0f" stroke-width="1.300">${[724, 806].map(x => `<circle cx="${x}" cy="355" r="3.500"/><path d="M${x} 353v4" stroke="#8a008a"/>`).join('')}</g>
    <text x="883" y="202">上部纵筋</text><text class="bars" x="984" y="202">3C14+2C16</text>
    <text x="747" y="217">200</text><text x="849" y="348">300</text><text x="860" y="388">200</text><text x="644" y="405">500</text><text x="963" y="490">200</text><text x="803" y="592">400</text>
  </g></svg>`);

/* ---------- section editor window ---------- */
define('section-dialog', `
  :host { display: flex; flex-direction: column; border: 1px solid #2d2d2d; background: linear-gradient(#98b2d0, #b9d1ea 30px); box-shadow: inset -1px -1px #5ecbf0; padding: 0 7px 7px; }
  h2 { margin: 0; font: inherit; height: 31px; padding: 11px 0 0; flex: none; }
  .client { flex: 1; min-height: 0; display: flex; flex-direction: column; background: #f0f0f0; }
  .tabs { display: flex; align-items: flex-end; height: 21px; padding-left: 2px; flex: none; }
  .tabs button { width: 46px; height: 19px; border: 1px solid #d0d0d0; border-bottom: 0; padding-right: 10px; }
  .tabs button[aria-selected=true] { width: 52px; height: 21px; background: #fff; padding-right: 14px; }
  .page { flex: 1; min-height: 0; display: flex; flex-direction: column; background: #f2f2f2; border: 1px solid #dcdcdc; padding: 2px 3px 2px 4px; box-shadow: inset 0 0 0 1px #fff; }
  .row { display: flex; align-items: center; flex: none; height: 28px; border-radius: 3px; background: linear-gradient(#fbfbfb, #f0f0f0); padding-left: 3px; }
  .row.one { gap: 10px; padding-left: 4px; } .row.two { color: #6d6d6d; width: 196px; }
  .grip { width: 2px; height: 15px; background: repeating-linear-gradient(#bdbdbd 0 2px, transparent 2px 4px); margin-right: -4px; }
  .two .grip { margin-right: 6px; }
  .sep { width: 1px; height: 16px; background: #b5b5b5; margin: 0 -7px 0 -3px; }
  .on { height: 24px; width: 59px; border: 1px solid #0078d7; background: #dcebf7; margin-right: -5px; }
  .combo { height: 23px; width: 133px; border: 1px solid #6d6d6d; margin-left: 2px; display: flex; align-items: center; }
  select { appearance: none; flex: 1; height: 21px; padding: 0 0 1px 1px; font-size: 13px; }
  footer { height: 20px; display: flex; gap: 1px; margin-top: 4px; flex: none; line-height: 18px; }
  footer span { border: 1px solid #d4d4d4; background: linear-gradient(#fff, #f0f0f0); padding-left: 3px; white-space: pre; }
  footer small { font: 10px/18px "Liberation Mono", monospace; } footer .p { width: 147px; padding-left: 8px; } footer .q { flex: 1; display: flex; } footer svg { margin: 7px 2px 0 auto; }`,
  () => `<h2>截面编辑</h2><div class="client">
  <div class="tabs" role="tablist"><button role="tab" aria-selected="false" type="button">截面</button><button role="tab" aria-selected="true" type="button">配筋</button></div>
  <div class="page"><div class="row one"><span class="grip"></span>${['布角筋','布边筋','特殊布筋','对齐钢筋','画箍筋'].map(t => `<button type="button">${t}</button>`).join('')}<span class="sep"></span><button class="on" type="button">修改纵筋</button>${['修改箍筋','编辑弯钩','端头伸缩','删除'].map(t => `<button type="button">${t}</button>`).join('')}</div>
  <div class="row two"><span class="grip"></span><label for="bar">钢筋信息</label><div class="combo"><select id="bar"><option>2C14</option></select>${icon('caret', 12)}</div></div>
  <section-canvas></section-canvas></div>
  <footer><span class="p"><small>(X: -164 Y: 349)</small></span><span class="q">选择纵筋点(支持点选，多选，框选)，右键确定<svg width="12" height="12" fill="#bdbdbd"><path d="M8 0h2v2H8zM8 4h2v2H8zM4 4h2v2H4zM8 8h2v2H8zM4 8h2v2H4zM0 8h2v2H0z"/></svg></span></footer></div>`);

/* ---------- red review marks ---------- */
define('review-marks', `
  :host { display: block; pointer-events: none; }
  svg { width: 100%; height: 100%; }
  g { fill: none; stroke: #f00; stroke-width: 3; } g .tip { fill: #f00; stroke: none; }
  text { font: 23px "Noto Sans CJK SC", sans-serif; fill: #f00; stroke: #f00; stroke-width: .4; }
  .n { font: 700 24px "Liberation Sans", sans-serif; }`,
  () => {
    const arrow = (x1, y1, x2, y2) => {
      const a = Math.atan2(y2 - y1, x2 - x1) * 180 / Math.PI;
      return `<path d="M${x1} ${y1}L${x2} ${y2}"/><path class="tip" d="M2 0L-13-5l3 5-3 5z" transform="translate(${x2} ${y2}) rotate(${a})"/>`;
    };
    return `<svg><g><ellipse cx="674" cy="154" rx="37" ry="35"/><ellipse cx="575" cy="207" rx="30" ry="21"/><ellipse cx="754" cy="525" rx="83" ry="51"/>
    ${arrow(412, 374, 455, 193)}${arrow(573, 284, 652, 188)}${arrow(584, 373, 676, 480)}</g>
    <text x="499" y="297">点修改纵筋</text><text x="481" y="369">左键框要修改的钢筋</text><text x="401" y="411">右键修改钢筋信息</text><text x="405" y="457">左键</text><text class="n" x="565" y="215">1</text></svg>`;
  });

/* ---------- status bar ---------- */
define('status-bar', `
  :host { display: flex; gap: 3px; height: 20px; background: #f0f0f0; }
  span { border: 1px solid #cfcfcf; background: linear-gradient(#fff, #f0f0f0); padding-left: 1px; line-height: 17px; flex: none; }
  small { font: 10px/17px "Liberation Mono", monospace; }`,
  () => `<span style="width:147px"></span><span style="width:78px">层高<small>:2.8m</small></span><span style="width:97px">底标高<small>:10.27m</small></span><span style="width:47px"><small>0</small></span><span class="grow"></span>`);

/* ---------- input method bar ---------- */
define('ime-bar', `
  :host { display: flex; align-items: center; justify-content: space-between; height: 25px; width: 186px; background: #fff; border: 1px solid #b9cbe0; padding: 0 3px 0 1px; }
  b { color: #1d74c9; font-size: 15px; line-height: 20px; } .s { --size: 27px; margin: -4px 0 0 -1px; }`,
  () => `<ui-icon class="s" name="sogou"></ui-icon><b>中</b>${icon('comma', 14)}${icon('micblue')}${icon('keyblue')}${icon('person')}${icon('shirt', 14)}${icon('wrench', 15)}`);

/* ---------- task bar ---------- */
define('task-bar', `
  :host { display: flex; height: 40px; background: #000b10; color: #fff; align-items: stretch; }
  button { display: flex; align-items: center; justify-content: center; }
  .start { width: 48px; background: #000; }
  .search { width: 344px; background: #333; display: flex; align-items: center; padding: 0 12px 0 8px; gap: 4px; }
  .search input { flex: 1; min-width: 0; font-size: 14px; height: 24px; } .search input::placeholder { color: #9b9b9b; opacity: 1; }
  .apps { display: flex; padding-left: 2px; flex: 1; }
  .apps button { width: 49px; border-bottom: 2px solid transparent; border-top: 2px solid transparent; }
  .apps .sep { width: 24px; display: flex; align-items: center; justify-content: center; } .sep i { width: 4px; height: 16px; border: 1px solid #2c3a40; border-width: 0 1px; }
  .apps .run { width: 41px; margin: 0 4px; border-bottom-color: #76b9ed; }
  .apps .now { width: 49px; background: #31393d; border-bottom-color: #76b9ed; }
  .two { text-align: center; line-height: 17px; padding-top: 3px; width: 60px; white-space: nowrap; }
  .tray { display: flex; align-items: center; gap: 9px; margin: 0 16px 0 11px; font-size: 14px; }
  .note { position: relative; width: 50px; margin-left: 6px; border-right: 1px solid #444; margin-right: 4px; padding-right: 8px; }
  .note i { position: absolute; left: 22px; top: 18px; width: 17px; height: 17px; border-radius: 50%; background: #333; border: 1px solid #888; font: 700 11px/15px "Noto Sans", sans-serif; }`,
  () => `<button class="start" type="button" aria-label="开始">${icon('windows')}</button>
  <div class="search">${icon('ring', 24)}<input type="text" placeholder="在这里输入你要搜索的内容" aria-label="搜索">${icon('mic')}</div>
  <div class="apps">${['fan', 'swirl'].map(n => `<button type="button" aria-label="${n}">${icon(n, 22)}</button>`).join('')}<span class="sep"><i></i></span>
  ${[['edge', ''], ['store', ''], ['explorer', ''], ['gball', 'run'], ['green', 'run'], ['app', 'now'], ['note', 'run']].map(([n, c]) => `<button type="button" class="${c}" aria-label="${n}">${icon(n, n === 'edge' ? 22 : 24)}</button>`).join('')}</div>
  <div class="two">15%<br>CPU使用</div>
  <div class="tray">${icon('chevup', 14)}${icon('battery')}${icon('wifi')}${icon('speaker', 18)}<svg width="24" height="14"><path d="M.5.5h23v13H.5z" fill="none" stroke="#fff"/><path d="M3 4h18M3 7h18" stroke="#fff" stroke-dasharray="1 1"/><path d="M6 10.500h12" stroke="#fff"/></svg><span>中</span>${icon('sogou')}</div>
  <div class="two">22:40<br>2017/9/4</div>
  <button class="note" type="button" aria-label="通知">${icon('notify')}<i>2</i></button>`);

/* ---------- shell ---------- */
define('app-shell', `
  :host { display: flex; flex-direction: column; height: 100vh; position: relative; overflow: hidden; }
  title-bar, menu-bar, tool-strips, status-bar, task-bar { flex: none; }
  main { flex: 1; min-height: 0; display: flex; }
  section-dialog { position: absolute; left: 367px; right: 22px; top: 83px; bottom: 65px; }
  review-marks { position: absolute; inset: 0; }
  ime-bar { position: absolute; right: 0; bottom: 40px; }`,
  () => `<title-bar></title-bar><menu-bar></menu-bar><tool-strips></tool-strips>
  <main><nav-panel></nav-panel><member-panel></member-panel><drawing-area></drawing-area></main>
  <status-bar></status-bar><task-bar></task-bar><section-dialog></section-dialog><review-marks></review-marks><ime-bar></ime-bar>`);
</script>
</body>
</html>
